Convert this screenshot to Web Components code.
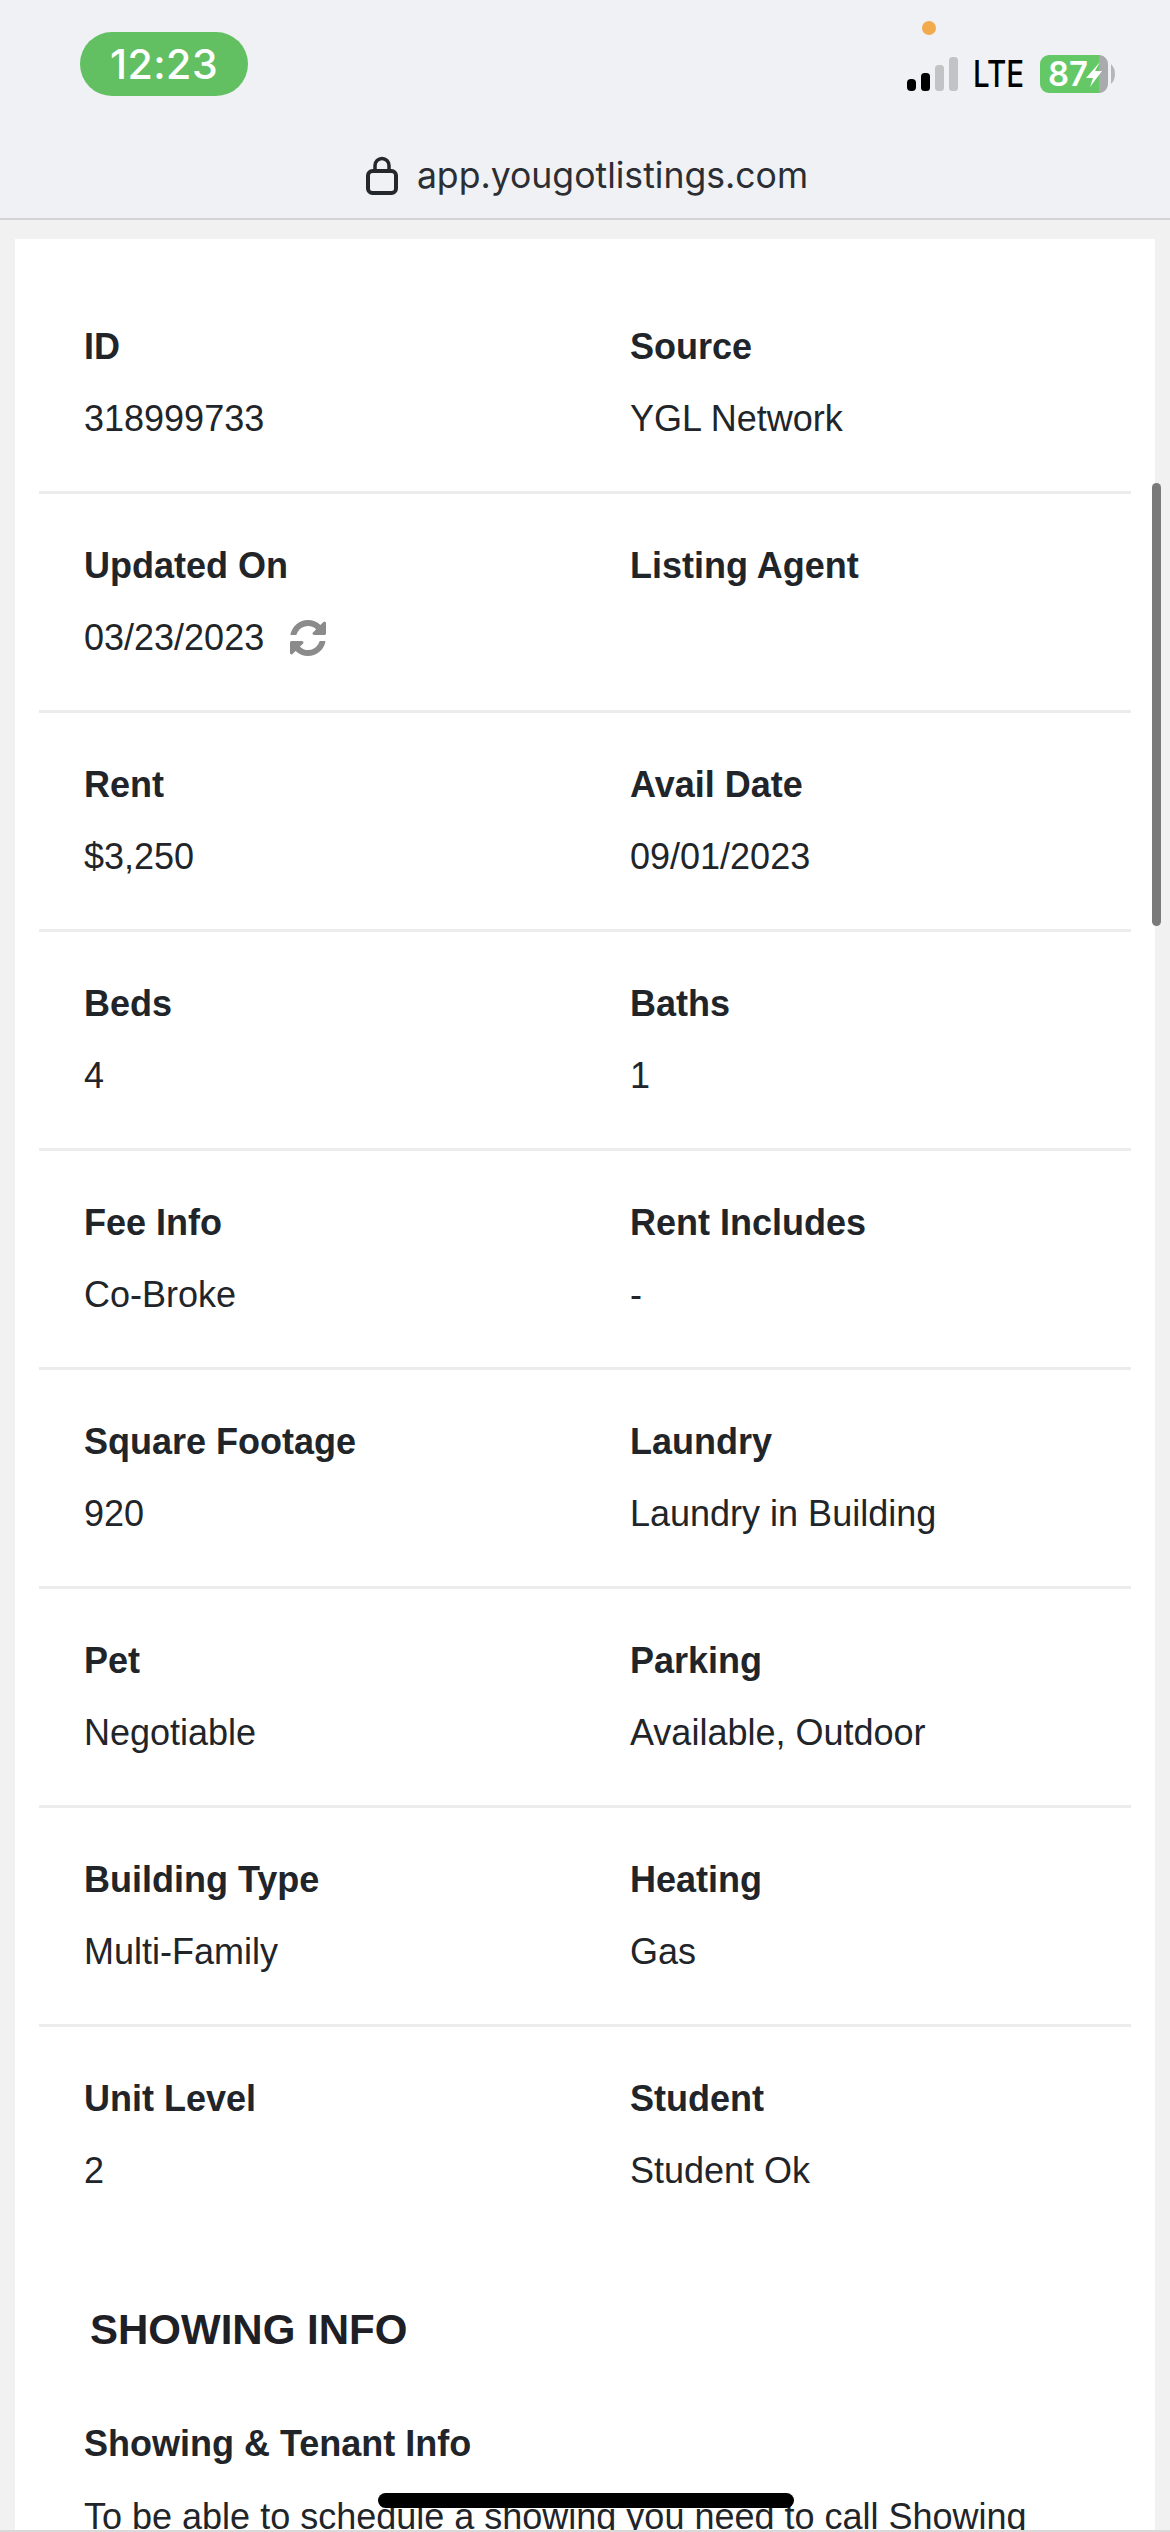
<!DOCTYPE html>
<html lang="en"><head><meta charset="utf-8"><title>Listing</title>
<style>
html,body{margin:0;padding:0;height:2532px;overflow:hidden;background:#f1f1f1;font-family:"Liberation Sans",Arial,sans-serif;color:#212529}
</style></head><body>
<browser-header></browser-header>
<listing-card>
  <detail-row>
    <detail-cell label="ID">318999733</detail-cell>
    <detail-cell label="Source">YGL Network</detail-cell>
  </detail-row>
  <detail-row>
    <detail-cell label="Updated On">03/23/2023<refresh-icon></refresh-icon></detail-cell>
    <detail-cell label="Listing Agent"></detail-cell>
  </detail-row>
  <detail-row>
    <detail-cell label="Rent">$3,250</detail-cell>
    <detail-cell label="Avail Date">09/01/2023</detail-cell>
  </detail-row>
  <detail-row>
    <detail-cell label="Beds">4</detail-cell>
    <detail-cell label="Baths">1</detail-cell>
  </detail-row>
  <detail-row>
    <detail-cell label="Fee Info">Co-Broke</detail-cell>
    <detail-cell label="Rent Includes">-</detail-cell>
  </detail-row>
  <detail-row>
    <detail-cell label="Square Footage">920</detail-cell>
    <detail-cell label="Laundry">Laundry in Building</detail-cell>
  </detail-row>
  <detail-row>
    <detail-cell label="Pet">Negotiable</detail-cell>
    <detail-cell label="Parking">Available, Outdoor</detail-cell>
  </detail-row>
  <detail-row>
    <detail-cell label="Building Type">Multi-Family</detail-cell>
    <detail-cell label="Heating">Gas</detail-cell>
  </detail-row>
  <detail-row last>
    <detail-cell label="Unit Level">2</detail-cell>
    <detail-cell label="Student">Student Ok</detail-cell>
  </detail-row>
  <showing-info></showing-info>
</listing-card>
<overlay-chrome></overlay-chrome>
<script>
function def(name, html){
  customElements.define(name, class extends HTMLElement{
    constructor(){super();this.attachShadow({mode:'open'}).innerHTML=html;}
  });
}
def('browser-header',`<style>
:host{display:block;height:220px;box-sizing:border-box;background:#f0f1f4;border-bottom:2px solid #d3d3d5;font-family:Inter,"Liberation Sans",sans-serif}
.status{box-sizing:border-box;height:136px;display:flex;justify-content:space-between;align-items:flex-start;padding:32px 0 0 80px}
.time{width:168px;height:64px;border-radius:32px;background:#62c063;color:#fff;font-size:41px;font-weight:500;line-height:64px;text-align:center;letter-spacing:.5px}
.right{display:flex;flex-direction:column;align-items:flex-start;width:263px;margin-top:-11px}
.dot{width:14px;height:14px;border-radius:50%;background:#f2aa4c;margin:0 0 20px 15px}
.ind{display:flex;align-items:center;height:38px}
.lte{width:52px;font-size:37px;font-weight:500;color:#000;margin:0 15px;line-height:38px;white-space:nowrap;transform:scaleX(.8);transform-origin:0 50%}
.url{display:flex;justify-content:center;align-items:center;gap:19px;height:60px;margin-top:9px;font-size:35.6px;color:#2b2e33;padding-left:4px}
svg{display:block}
</style>
<div class="status"><div class="time">12:23</div>
<div class="right"><div class="dot"></div><div class="ind">
<svg width="51" height="34" viewBox="0 0 51 34"><rect x="0" y="22" width="9" height="12" rx="4" fill="#000"/><rect x="14" y="16" width="9" height="18" rx="3.5" fill="#000"/><rect x="28" y="8" width="9" height="26" rx="3.5" fill="#c2c3c5"/><rect x="42" y="0" width="9" height="34" rx="3.5" fill="#c2c3c5"/></svg>
<div class="lte">LTE</div>
<svg width="75" height="38" viewBox="0 0 75 38" style="overflow:visible"><path d="M9 0H59V38H9A9 9 0 0 1 0 29V9A9 9 0 0 1 9 0Z" fill="#64c866"/><path d="M59 0H60A9 9 0 0 1 68 9V29A9 9 0 0 1 60 38H59Z" fill="#a9aaac"/><path d="M71 9Q75 13 75 19T71 29Z" fill="#b5b6b8"/><text x="8" y="31" font-family="Inter,'Liberation Sans',sans-serif" font-size="34" font-weight="600" fill="#fff" textLength="40" lengthAdjust="spacingAndGlyphs">87</text><path d="M60 7 46 23H53L50 32 62 16H55Z" fill="#fff"/></svg>
</div></div></div>
<div class="url"><svg width="32" height="39" viewBox="0 0 32 39"><rect x="2" y="15" width="28" height="22" rx="4.5" fill="none" stroke="#24272b" stroke-width="4"/><path d="M9 15V9.500A7 7 0 0 1 23 9.500V15" fill="none" stroke="#24272b" stroke-width="3.500"/></svg><span>app.yougotlistings.com</span></div>`);
def('listing-card',`<style>
:host{display:block;box-sizing:border-box;margin:19px 15px 0;padding:36px 24px 0;background:#fff;height:2293px;overflow:hidden}
</style><slot></slot>`);
def('detail-row',`<style>
:host{display:grid;grid-template-columns:546px 546px;box-sizing:border-box;height:219px;padding-top:45px;border-bottom:3px solid #ececec}
:host([last]){border-bottom:0;height:216px}
</style><slot></slot>`);
customElements.define('detail-cell',class extends HTMLElement{
  constructor(){super();this.attachShadow({mode:'open'}).innerHTML=`<style>
:host{display:block;padding:0 45px;font-size:36px;line-height:54px;color:#212529;min-width:0}
.l{font-weight:700;height:54px;margin-bottom:18px}
.v{height:54px;display:flex;align-items:center}
</style><div class="l"></div><div class="v"><slot></slot></div>`;}
  connectedCallback(){this.shadowRoot.querySelector('.l').textContent=this.getAttribute('label');}
});
def('refresh-icon',`<style>
:host{display:inline-block;width:36px;height:36px;margin-left:26px}
svg{display:block;width:36px;height:36px}
</style><svg viewBox="128 128 1536 1536"><path fill="#8b8b8b" d="M1639 1056q0 5-1 7-64 268-268 434.500t-478 166.500q-146 0-282.500-55t-243.500-157l-129 129q-19 19-45 19t-45-19-19-45v-448q0-26 19-45t45-19h448q26 0 45 19t19 45-19 45l-137 137q71 66 161 102t187 36q134 0 250-65t186-179q11-17 53-117 8-23 30-23h192q13 0 22.500 9.500t9.500 22.500zm25-800v448q0 26-19 45t-45 19h-448q-26 0-45-19t-19-45 19-45l138-138q-148-137-349-137-134 0-250 65t-186 179q-11 17-53 117-8 23-30 23h-199q-13 0-22.500-9.500t-9.500-22.500v-7q65-268 270-434.500t480-166.500q146 0 284 55.500t245 156.500l130-129q19-19 45-19t45 19 19 45z"/></svg>`);
def('showing-info',`<style>
:host{display:block;padding:0 45px;color:#212529}
h2{margin:0 0 0 6px;font-size:42px;line-height:50px;font-weight:700;color:#1e2026;padding-top:62px;height:50px}
h3{margin:62px 0 0;font-size:36px;line-height:54px;font-weight:700}
p{margin:19px 0 0;font-size:36px;line-height:54px;width:1010px}
</style><h2>SHOWING INFO</h2><h3>Showing &amp; Tenant Info</h3><p>To be able to schedule a showing you need to call Showing</p>`);
def('overlay-chrome',`<style>
:host{display:block}
.sb{position:fixed;left:1152px;top:483px;width:9px;height:443px;border-radius:5px;background:#7a7a7a}
.home{position:fixed;left:378px;top:2493px;width:416px;height:15px;border-radius:8px;background:#000}
.foot{position:fixed;left:0;top:2530px;width:1170px;height:2px;background:#d9d9d9}
</style><div class="sb"></div><div class="home"></div><div class="foot"></div>`);
</script>
</body></html>
